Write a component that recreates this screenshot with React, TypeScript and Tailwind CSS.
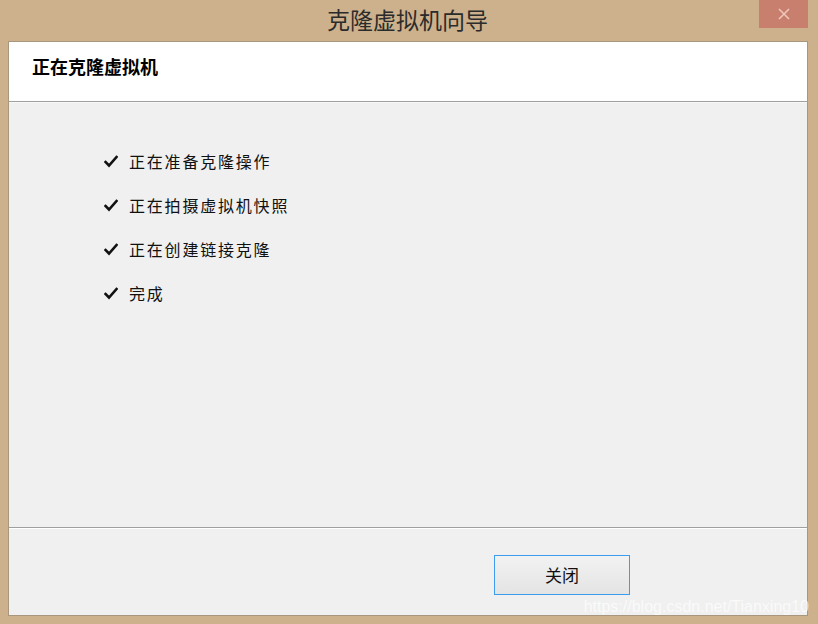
import React from 'react';

const steps = ['正在准备克隆操作', '正在拍摄虚拟机快照', '正在创建链接克隆', '完成'];

const cjk = { fontFamily: '"Noto Sans CJK SC", "Noto Sans", sans-serif' };

const Check: React.FC = () => (
  <svg width="14" height="13" viewBox="0 0 14 13" className="shrink-0">
    <path d="M1.5 7 L5 10.5 L12.5 2" fill="none" stroke="#111" strokeWidth="2.6" strokeLinecap="square" />
  </svg>
);

export default function App() {
  return (
    <div className="w-[818px] h-[624px] bg-[#cdb18c] overflow-hidden flex flex-col" style={cjk}>
      {/* Title bar */}
      <div className="relative h-[41px] shrink-0 flex items-center justify-center">
        <span className="text-[23px] text-[#2b2b2b] leading-none mt-[-2px] mr-[3px]">克隆虚拟机向导</span>
        <div className="absolute right-[10px] top-0 w-[49px] h-[28px] bg-[#c97f6e] flex items-center justify-center">
          <svg width="14" height="14" viewBox="0 0 14 14">
            <path d="M2 2 L12 12 M12 2 L2 12" stroke="#eec6bc" strokeWidth="1.6" />
          </svg>
        </div>
      </div>

      {/* Client area */}
      <div className="ml-[8px] w-[800px] h-[575px] border border-[#a8967e] flex flex-col bg-[#f0f0f0]">
        <div className="h-[59px] shrink-0 bg-white flex items-start pl-[23px] pt-[12px]">
          <span className="text-[18px] font-bold text-black leading-[24px]">正在克隆虚拟机</span>
        </div>
        <div className="h-px bg-[#a0a0a0]" />
        <div className="h-px bg-[#f8f8f8]" />

        <div className="h-[424px] shrink-0 flex flex-col gap-[22px] pl-[95px] pt-[47px]">
          {steps.map((s) => (
            <div key={s} className="flex items-center gap-[11px] h-[22px]">
              <Check />
              <span className="text-[16px] tracking-[1.8px] text-[#111] leading-[22px]">{s}</span>
            </div>
          ))}
        </div>

        <div className="h-px bg-[#a0a0a0]" />
        <div className="h-px bg-white" />

        <div className="relative flex-1 flex items-start pl-[485px] pt-[26px]">
          <button className="w-[136px] h-[40px] border border-[#3c9cf0] bg-gradient-to-b from-[#f2f2f2] to-[#e4e4e4] text-[17px] text-[#111] flex items-center justify-center">
            关闭
          </button>
          <span
            className="absolute right-[-2px] bottom-[-4px] text-[16px] text-white/70 whitespace-nowrap"
            style={{ fontFamily: '"Liberation Sans", Arial, sans-serif' }}
          >
            https://blog.csdn.net/Tianxing10
          </span>
        </div>
      </div>
    </div>
  );
}
